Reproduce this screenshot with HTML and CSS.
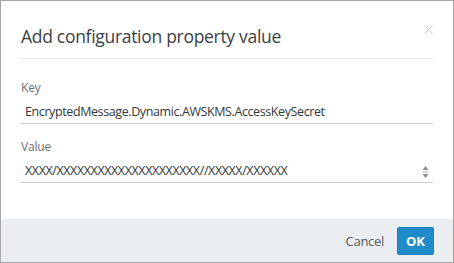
FILE: index.html
```html
<!DOCTYPE html>
<html>
<head lang="en">
    <meta charset="UTF-8">
    <title>Add configuration property value</title>
    <link rel="stylesheet" href="styles.css">
</head>
<body>
<div class="dialog">
    <div class="header">
        <h1 class="title">Add configuration property value</h1>
        <span class="close">
            <svg width="9" height="9" viewBox="0 0 9 9">
                <path d="M0.5 0.5L8.5 8.5M8.5 0.5L0.5 8.5" stroke="#c9cdd0" stroke-width="1"/>
            </svg>
        </span>
    </div>

    <div class="body">
        <div class="field">
            <div class="label">Key</div>
            <div class="input">EncryptedMessage.Dynamic.AWSKMS.AccessKeySecret</div>
        </div>
        <div class="field">
            <div class="label">Value</div>
            <div class="input">
                <span>XXXX/XXXXXXXXXXXXXXXXXXXXX//XXXXX/XXXXXX</span>
                <span class="spin">
                    <svg width="7" height="14" viewBox="0 0 7 14">
                        <path d="M3.5 1L6.5 5H0.5Z" fill="#8a8f93"/>
                        <path d="M0.5 7H6.5" stroke="#b5b9bc" stroke-width="1"/>
                        <path d="M3.5 13L6.5 9H0.5Z" fill="#8a8f93"/>
                    </svg>
                </span>
            </div>
        </div>
    </div>

    <div class="footer">
        <span class="cancel">Cancel</span>
        <span class="ok">OK</span>
    </div>
</div>
</body>
</html>
```

FILE: styles.css
```css
*{
    margin: 0;
    padding: 0;
    box-sizing: border-box;
}

body{
    font-family: "Open Sans", "Noto Sans", sans-serif;
    background: #fff;
}

.dialog{
    width: 454px;
    height: 263px;
    border: 1px solid #a7a7a7;
    display: flex;
    flex-direction: column;
}

.header{
    margin: 0 20px;
    padding-top: 19px;
    padding-bottom: 6px;
    border-bottom: 1px solid #dce2e5;
    display: flex;
    justify-content: space-between;
    align-items: flex-start;
}
.title{
    font-size: 17.5px;
    font-weight: normal;
    letter-spacing: -0.3px;
    line-height: 32px;
    color: #3b3f42;
}
.close{
    margin-top: 5px;
    line-height: 0;
}

.body{
    flex: 1;
    padding: 21px 20px 0;
}
.field{
    margin-bottom: 15px;
}
.label{
    font-size: 12px;
    letter-spacing: -0.2px;
    line-height: 16px;
    color: #6b7074;
}
.input{
    margin-top: 5px;
    padding: 0 4px;
    font-size: 12.5px;
    letter-spacing: -0.4px;
    line-height: 22px;
    color: #33373a;
    border-bottom: 1px solid #c9ccce;
    display: flex;
    justify-content: space-between;
    align-items: center;
}
.spin{
    line-height: 0;
    padding-top: 2px;
}

.footer{
    height: 43px;
    background: #ebeef1;
    padding: 0 19px 0 0;
    display: flex;
    justify-content: flex-end;
    align-items: center;
    gap: 8px;
}
.cancel{
    font-size: 13px;
    letter-spacing: -0.3px;
    color: #575b5e;
    padding: 0 5px;
    cursor: pointer;
}
.ok{
    width: 37px;
    height: 28px;
    background: #1f8bc9;
    border: 1px solid #1a80bb;
    border-radius: 2px;
    color: #fff;
    font-size: 13px;
    font-weight: bold;
    line-height: 26px;
    text-align: center;
    cursor: pointer;
}
```
